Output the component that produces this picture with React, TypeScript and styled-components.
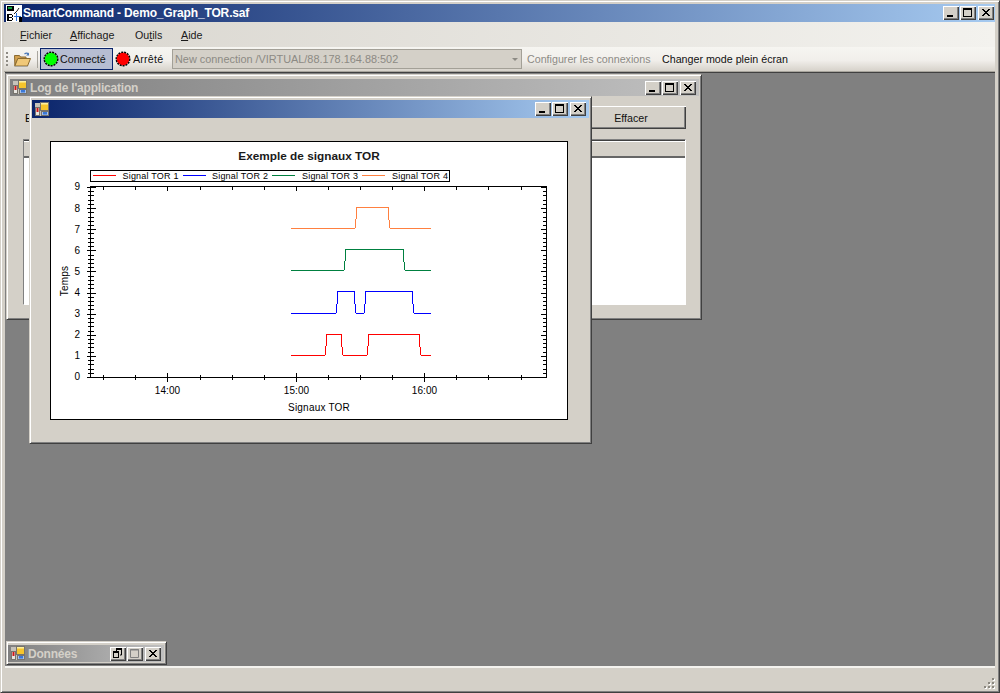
import React from "react";
import styled, { createGlobalStyle } from "styled-components";

const Global = createGlobalStyle`
  html, body { margin: 0; padding: 0; background: #d4d0c8; }
  body { font-family: "Liberation Sans", Arial, sans-serif; font-size: 10.7px; overflow: hidden; }
`;

const Shell = styled.div`
  width: 1000px; height: 693px; box-sizing: border-box; position: relative;
  display: flex; flex-direction: column; background: #d4d0c8;
  border: 1px solid; border-color: #d4d0c8 #404040 #404040 #d4d0c8;
  box-shadow: inset 1px 1px 0 #fff, inset -1px -1px 0 #808080;
  padding: 3px 4px 2px 3px;
`;
const MainTitle = styled.div`
  height: 18px; flex: none; display: flex; align-items: center;
  background: linear-gradient(90deg, #0a246a, #a6caf0);
  color: #fff; font-weight: 700; font-size: 12px; letter-spacing: -0.15px; padding: 0 1px 0 2px; gap: 1px;
`;
const TitleText = styled.span<{ $inactive?: boolean }>`
  flex: 1; white-space: nowrap; color: ${p => (p.$inactive ? "#d4d0c8" : "#fff")};
  line-height: 18px;
`;
const Caption = styled.div`
  display: flex; flex: none; gap: 1px;
`;
const CapBtn = styled.div<{ $gap?: boolean }>`
  width: 16px; height: 14px; box-sizing: border-box; background: #d4d0c8;
  margin-left: ${p => (p.$gap ? "1px" : "0")};
  box-shadow: inset 1px 1px 0 #fff, inset -1px -1px 0 #404040, inset -2px -2px 0 #808080;
  display: flex;
`;
const MenuBar = styled.div`
  height: 25px; flex: none; display: flex; align-items: center;
  background: linear-gradient(90deg, #d8d5ce, #f3f2ee);
  padding-left: 16px; color: #1a1a1a;
`;
const MenuItem = styled.span<{ $w: number }>`
  width: ${p => p.$w}px; white-space: nowrap;
`;
const ToolBar = styled.div`
  height: 25px; flex: none; display: flex; align-items: center;
  background: linear-gradient(180deg, #f6f5f1 0%, #f1efeb 55%, #d6d2ca 100%);
  border-bottom: 1px solid #a8a59d; padding-left: 2px; box-sizing: border-box;
`;
const Grip = styled.div`
  width: 2px; height: 15px; margin-right: 6px;
  background: repeating-linear-gradient(180deg, #8e8b84 0 2px, transparent 2px 4px);
`;
const Sep = styled.div`
  width: 1px; height: 17px; background: #a8a59d; margin: 0 2px 0 6px;
`;
const ConnectedBtn = styled.div`
  width: 73px; height: 22px; box-sizing: border-box; background: #b6bdd2;
  border: 1px solid #0a246a; display: flex; align-items: center; padding-left: 2px; gap: 1px;
  white-space: nowrap; color: #111;
`;
const StopBtn = styled.div`
  display: flex; align-items: center; margin-left: 2px; gap: 2px; width: 57px; color: #111;
  letter-spacing: 0.2px;
`;
const Combo = styled.div`
  width: 350px; height: 20px; box-sizing: border-box; background: #d4d0c8;
  border: 1px solid #a3a097; color: #8c8a84; display: flex; align-items: center;
  padding: 0 2px; justify-content: space-between; white-space: nowrap; font-size: 10.9px;
`;
const ComboArrow = styled.div`
  width: 0; height: 0; border: 3px solid transparent; border-top: 3px solid #8c8a84;
  border-bottom: 0; margin-right: 1px;
`;
const ToolText = styled.span<{ $disabled?: boolean; $w: number; $ml?: number }>`
  width: ${p => p.$w}px; flex: none; white-space: nowrap;
  margin-left: ${p => p.$ml ?? 0}px;
  color: ${p => (p.$disabled ? "#8c8a84" : "#111")};
`;
const Desktop = styled.div`
  flex: 1; position: relative; background: #808080;
  border-top: 1px solid #404040; margin: 0 0 0 1px;
  border-bottom: 2px solid #f4f3ef;
`;
const Status = styled.div`
  height: 22px; flex: none; position: relative;
`;
const ResizeGrip = styled.svg`
  position: absolute; right: 0; bottom: 1px;
`;
const Win = styled.div<{ $x: number; $y: number; $w: number; $h: number }>`
  position: absolute; left: ${p => p.$x}px; top: ${p => p.$y}px;
  width: ${p => p.$w}px; height: ${p => p.$h}px; box-sizing: border-box;
  background: #d4d0c8; display: flex; flex-direction: column;
  border: 1px solid; border-color: #d4d0c8 #404040 #404040 #d4d0c8;
  box-shadow: inset 1px 1px 0 #fff, inset -1px -1px 0 #808080;
`;
const WinTitle = styled.div<{ $inactive?: boolean; $h: number }>`
  height: ${p => p.$h}px; flex: none; display: flex; align-items: center; gap: 2px;
  background: linear-gradient(90deg, ${p => (p.$inactive ? "#808080, #c0c0c0" : "#0a246a, #a6caf0")});
  font-weight: 700; font-size: 12px; letter-spacing: -0.2px; padding: 0 3px 0 3px;
`;
const LogWin = styled(Win)` padding: 4px 2px 3px 3px; `;
const ChildWin = styled(Win)` padding: 3px 2px 3px 2px; `;
const MiniWin = styled(Win)` padding: 3px 2px 3px 1px; `;
const LogActions = styled.div`
  display: flex; justify-content: space-between; align-items: center;
  padding: 10px 13px 0 15px; height: 23px; flex: none;
`;
const ClearBtn = styled.div`
  width: 110px; height: 23px; box-sizing: border-box; background: #d4d0c8;
  display: flex; align-items: center; justify-content: center; color: #111;
  box-shadow: inset 1px 1px 0 #fff, inset -1px -1px 0 #404040, inset -2px -2px 0 #808080;
`;
const ListView = styled.div`
  margin: 10px 13px 0 13px; height: 166px; flex: none; display: flex; flex-direction: column;
  border: 1px solid; border-color: #808080 #fff #fff #808080; box-sizing: border-box;
  box-shadow: inset 1px 1px 0 #404040;
`;
const ListHead = styled.div`
  height: 17px; flex: none; margin-top: 1px; background: #d4d0c8;
  border-top: 1px solid #fff; border-bottom: 2px solid #666; box-sizing: border-box;
`;
const ListBody = styled.div` flex: 1; background: #fff; `;
const ChildBody = styled.div` flex: 1; padding: 23px 20px 0 18px; `;
const ChartBox = styled.div`
  width: 518px; height: 279px; box-sizing: border-box; border: 1px solid #000;
  background: #fff; display: flex;
`;

const CIcon = styled.svg<{ $fixed?: boolean }>`
  display: block; flex: ${p => (p.$fixed ? "none" : "initial")};
`;

const MinGlyph = () => <CIcon width="16" height="14" viewBox="0 0 16 14"><rect x="4" y="9" width="6" height="2" fill="#000"/></CIcon>;
const MaxGlyph = ({ off }: { off?: boolean }) => (
  <CIcon width="16" height="14" viewBox="0 0 16 14">
    {off ? <path d="M3.5 2.5h8v8h-8z M3 3h9" fill="none" stroke="#808080" /> : <><rect x="3" y="2" width="9" height="2" fill="#000"/><rect x="3.5" y="2.5" width="8" height="8" fill="none" stroke="#000"/></>}
  </CIcon>
);
const CloseGlyph = () => <CIcon width="16" height="14" viewBox="0 0 16 14"><path d="M4 3l7 7M5 3l7 7M11 3l-7 7M12 3l-7 7" stroke="#000" strokeWidth="1" shapeRendering="crispEdges"/></CIcon>;
const RestoreGlyph = () => (
  <CIcon width="16" height="14" viewBox="0 0 16 14">
    <rect x="6" y="1" width="6" height="2" fill="#000"/><path d="M6.5 2.5v2M11.5 2.5v5.5H10" fill="none" stroke="#000"/>
    <rect x="3" y="4" width="6" height="2" fill="#000"/><rect x="3.5" y="4.5" width="5" height="6" fill="none" stroke="#000"/>
  </CIcon>
);

const WinIcon = () => (
  <CIcon $fixed width="15" height="15" viewBox="0 0 15 15">
    <rect x="0" y="1" width="14" height="13" fill="#c6c3bb"/>
    <rect x="0.5" y="5.5" width="4" height="8" fill="#e9e7e2" stroke="#77746d"/>
    <rect x="1.5" y="6" width="2" height="4" fill="#d01818"/>
    <rect x="6.5" y="9.5" width="7" height="4" fill="#a9c4ee" stroke="#77746d"/>
    <rect x="8" y="10" width="4" height="2.5" fill="#3a78d8"/>
    <rect x="5.5" y="0.5" width="8" height="8" fill="#f6c52c" stroke="#77746d"/>
    <rect x="6" y="1" width="7" height="1.5" fill="#fdf0a0"/>
  </CIcon>
);
const AppIcon = () => (
  <CIcon $fixed width="16" height="17" viewBox="0 0 16 17">
    <rect width="16" height="17" fill="#fff"/>
    <rect x="1" y="1" width="7" height="5" fill="#000"/>
    <rect x="2" y="2" width="4" height="2" fill="#0f9f3f"/>
    <rect x="1" y="9" width="2" height="7" fill="#000"/><rect x="3" y="9" width="3" height="1" fill="#000"/>
    <rect x="3" y="12" width="3" height="1" fill="#000"/><rect x="3" y="15" width="3" height="1" fill="#000"/>
    <rect x="6" y="10" width="1" height="2" fill="#000"/><rect x="6" y="13" width="1" height="2" fill="#000"/>
    <path d="M8 9l3-3 2-3" stroke="#222" fill="none"/>
    <rect x="10" y="8" width="1" height="8" fill="#2a6fd8"/><rect x="8" y="11" width="7" height="1" fill="#2a6fd8"/>
    <rect x="13" y="12" width="3" height="5" fill="#000"/>
  </CIcon>
);
const Led = ({ color }: { color: string }) => (
  <CIcon $fixed width="16" height="16" viewBox="0 0 16 16">
    <circle cx="8" cy="8" r="6.5" fill={color}/>
    <circle cx="8" cy="8" r="6.8" fill="none" stroke="#000" strokeWidth="1.4" strokeDasharray="2 1"/>
  </CIcon>
);
const Folder = () => (
  <CIcon $fixed width="17" height="15" viewBox="0 0 17 15">
    <path d="M10.5 2c1.5-1.2 3-1 4 .2" stroke="#4a78b8" strokeWidth="1.3" fill="none"/>
    <path d="M15 .6v3h-3z" fill="#4a78b8"/>
    <path d="M.5 3.5h5l1 1.5h5.5v2H4L.9 13.5z" fill="#d2a04e" stroke="#8a6a30"/>
    <path d="M3.8 6.5h12.7l-3 7.5H.8z" fill="#f0c878" stroke="#8a6a30"/>
    <path d="M.5 14.5h13" stroke="#aaa69c"/>
  </CIcon>
);

const ChartLabel = styled.text`
  font-family: "Liberation Sans", Arial, sans-serif; font-size: 10px; fill: #000;
`;
const ChartHeading = styled.text`
  font-family: "Liberation Sans", Arial, sans-serif; font-size: 11.8px; font-weight: 700; fill: #1a1a1a;
`;
const LegendText = styled.text`
  font-family: "Liberation Sans", Arial, sans-serif; font-size: 9px; letter-spacing: 0.2px; fill: #000;
`;

const step = (base: number, top: number, xs: number[][]) => {
  let pts = `291,${base}`;
  const mid = (base * 0.6 + top * 0.4);
  xs.forEach(([u, d]) => {
    pts += ` ${u},${base} ${u + 1},${mid} ${u + 2},${top} ${d},${top} ${d + 1},${mid} ${d + 2},${base}`;
  });
  return pts + ` 431,${base}`;
};
const series = [
  { color: "#ff0000", pts: step(355, 334, [[325, 341], [367, 419]]), leg: [93, 116], tx: 122.5, label: "Signal TOR 1" },
  { color: "#0000ff", pts: step(313, 291, [[336, 354], [364, 412]]), leg: [183, 206], tx: 212, label: "Signal TOR 2" },
  { color: "#008040", pts: step(270, 249, [[344, 403]]), leg: [272, 295], tx: 302, label: "Signal TOR 3" },
  { color: "#ff8040", pts: step(228, 207, [[355, 388]]), leg: [362, 385], tx: 392, label: "Signal TOR 4" },
];
const xMinor = [103, 135, 200, 232, 264, 328, 360, 392, 456, 488, 521];
const xMajor: [number, string][] = [[167.5, "14:00"], [296.5, "15:00"], [424.5, "16:00"]];

const Chart = () => {
  const yTicks: React.ReactNode[] = [];
  for (let i = 0; i <= 45; i++) {
    const y = Math.round(377 - (i * 190) / 45) + 0.5;
    const major = i % 5 === 0;
    yTicks.push(<path key={i} d={major ? `M87 ${y}H96` : `M88 ${y}H94`} stroke="#000" />);
    yTicks.push(<path key={"r" + i} d={major ? `M541 ${y}H546` : `M543 ${y}H546`} stroke="#000" />);
  }
  return (
    <svg width="516" height="277" viewBox="51 142 516 277" shapeRendering="crispEdges">
      <ChartHeading x="309" y="160" textAnchor="middle">Exemple de signaux TOR</ChartHeading>
      <rect x="90.5" y="170.5" width="359" height="11" fill="#fff" stroke="#000"/>
      {series.map(s => (
        <g key={s.label}>
          <path d={`M${s.leg[0]} 175.5H${s.leg[1]}`} stroke={s.color}/>
          <LegendText x={s.tx} y="178.8">{s.label}</LegendText>
        </g>
      ))}
      <path d="M90.5 186.5H546.5V377.5H90.5Z" fill="none" stroke="#000"/>
      {yTicks}
      {xMinor.map(x => <path key={x} d={`M${x}.5 186V190M${x}.5 375V380`} stroke="#000"/>)}
      {xMajor.map(([x, l]) => (
        <g key={l}>
          <path d={`M${x} 186V191M${x} 373V382`} stroke="#000"/>
          <ChartLabel x={x} y="394" textAnchor="middle" letterSpacing="0.1">{l}</ChartLabel>
        </g>
      ))}
      {Array.from({ length: 10 }, (_, i) => (
        <ChartLabel key={i} x="80" y={380.3 - i * 21.1} textAnchor="end">{i}</ChartLabel>
      ))}
      <ChartLabel x="319" y="410.5" textAnchor="middle" letterSpacing="0.2">Signaux TOR</ChartLabel>
      <ChartLabel transform="translate(67.5 281) rotate(-90)" textAnchor="middle" letterSpacing="0.2">Temps</ChartLabel>
      {series.map(s => (
        <polyline key={s.color} points={s.pts} fill="none" stroke={s.color} strokeWidth="1"/>
      ))}
    </svg>
  );
};

export default function App() {
  return (
    <Shell>
      <Global />
      <MainTitle>
        <AppIcon />
        <TitleText>SmartCommand - Demo_Graph_TOR.saf</TitleText>
        <Caption>
          <CapBtn><MinGlyph /></CapBtn>
          <CapBtn><MaxGlyph /></CapBtn>
          <CapBtn $gap><CloseGlyph /></CapBtn>
        </Caption>
      </MainTitle>
      <MenuBar>
        <MenuItem $w={50}><u>F</u>ichier</MenuItem>
        <MenuItem $w={65}><u>A</u>ffichage</MenuItem>
        <MenuItem $w={46}>Ou<u>t</u>ils</MenuItem>
        <MenuItem $w={40}><u>A</u>ide</MenuItem>
      </MenuBar>
      <ToolBar>
        <Grip />
        <Folder />
        <Sep />
        <ConnectedBtn><Led color="#00ff00" />Connecté</ConnectedBtn>
        <StopBtn><Led color="#ff0000" />Arrêté</StopBtn>
        <Combo>New connection /VIRTUAL/88.178.164.88:502<ComboArrow /></Combo>
        <ToolText $disabled $w={135} $ml={5}>Configurer les connexions</ToolText>
        <ToolText $w={130}>Changer mode plein écran</ToolText>
      </ToolBar>
      <Desktop>
        <LogWin $x={1} $y={1} $w={696} $h={246}>
          <WinTitle $inactive $h={17}>
            <WinIcon />
            <TitleText $inactive>Log de l'application</TitleText>
            <Caption>
              <CapBtn><MinGlyph /></CapBtn>
              <CapBtn><MaxGlyph /></CapBtn>
              <CapBtn $gap><CloseGlyph /></CapBtn>
            </Caption>
          </WinTitle>
          <LogActions>
            <span>E</span>
            <ClearBtn>Effacer</ClearBtn>
          </LogActions>
          <ListView>
            <ListHead />
            <ListBody />
          </ListView>
        </LogWin>
        <ChildWin $x={24} $y={23} $w={563} $h={348}>
          <WinTitle $h={18}>
            <WinIcon />
            <TitleText />
            <Caption>
              <CapBtn><MinGlyph /></CapBtn>
              <CapBtn><MaxGlyph /></CapBtn>
              <CapBtn $gap><CloseGlyph /></CapBtn>
            </Caption>
          </WinTitle>
          <ChildBody>
            <ChartBox><Chart /></ChartBox>
          </ChildBody>
        </ChildWin>
        <MiniWin $x={1} $y={568} $w={161} $h={24}>
          <WinTitle $inactive $h={17}>
            <WinIcon />
            <TitleText $inactive>Données</TitleText>
            <Caption>
              <CapBtn><RestoreGlyph /></CapBtn>
              <CapBtn><MaxGlyph off /></CapBtn>
              <CapBtn $gap><CloseGlyph /></CapBtn>
            </Caption>
          </WinTitle>
        </MiniWin>
      </Desktop>
      <Status>
        <ResizeGrip width="12" height="12" viewBox="0 0 12 12">
          {[[9, 1], [9, 5], [5, 5], [9, 9], [5, 9], [1, 9]].map(([x, y]) => (
            <g key={`${x}-${y}`}>
              <rect x={x + 1} y={y + 1} width="2" height="2" fill="#fff"/>
              <rect x={x} y={y} width="2" height="2" fill="#8a877f"/>
            </g>
          ))}
        </ResizeGrip>
      </Status>
    </Shell>
  );
}
